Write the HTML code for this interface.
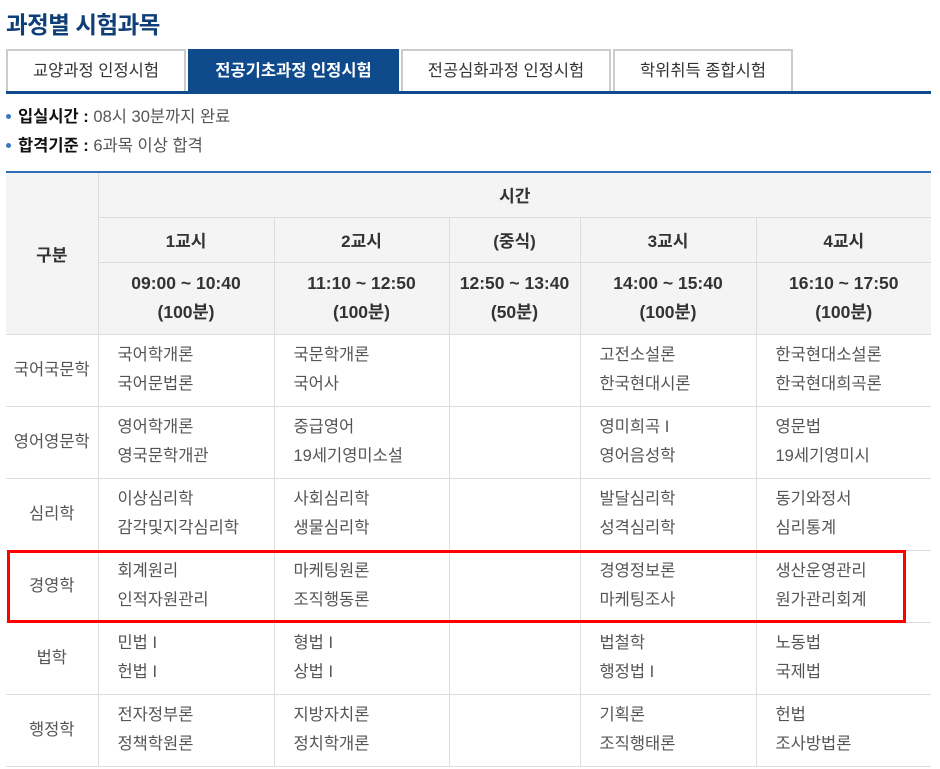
<!DOCTYPE html>
<html><head><meta charset="utf-8"><style>
*{margin:0;padding:0;box-sizing:border-box}
body{width:940px;height:769px;background:#fff;font-family:"Liberation Sans","Noto Sans CJK KR",sans-serif;position:relative;overflow:hidden;color:#444}
h1{position:absolute;left:6px;top:6px;font-size:23.5px;font-weight:bold;color:#0f3f78;letter-spacing:-0.5px}
.tab{position:absolute;top:49px;height:43px;border:2px solid #ccc;border-bottom:none;text-align:center;line-height:41px;font-size:16.5px;color:#333}
.tab.on{background:#0e4a8c;border-color:#0e4a8c;color:#fff;font-weight:bold}
.tabline{position:absolute;left:6px;top:91px;width:925px;height:3px;background:#0e4a8c}
.b{position:absolute;left:6px;font-size:16.5px;color:#555}
.b i{display:inline-block;width:5px;height:5px;border-radius:3px;background:#3a78c0;vertical-align:middle;margin-right:7px;margin-top:-3px}
.b strong{color:#111}
table{position:absolute;left:6px;top:171px;border-collapse:collapse;border-top:2px solid #2f6db5;table-layout:fixed;width:925px}
td,th{border:1px solid #ddd;font-size:16.5px}
table tr>*:first-child{border-left:none}
table tr>*:last-child{border-right:none}
th{background:#f4f4f4;color:#333;font-weight:bold;text-align:center;font-size:17px}
th.t{font-size:17.5px;line-height:29px}
td{height:72px;vertical-align:middle;padding-left:19px;line-height:29px;color:#555}
td.g{text-align:center;padding:0}
.red{position:absolute;left:7px;top:550px;width:899px;height:73px;border:3px solid #f00}
</style></head><body>
<h1>과정별 시험과목</h1>
<div class="tab" style="left:6px;width:180px">교양과정 인정시험</div>
<div class="tab on" style="left:188px;width:211px">전공기초과정 인정시험</div>
<div class="tab" style="left:401px;width:210px">전공심화과정 인정시험</div>
<div class="tab" style="left:613px;width:180px">학위취득 종합시험</div>
<div class="tabline"></div>
<div class="b" style="top:103px"><i></i><strong>입실시간 :</strong> 08시 30분까지 완료</div>
<div class="b" style="top:132px"><i></i><strong>합격기준 :</strong> 6과목 이상 합격</div>
<table>
<colgroup><col style="width:92px"><col style="width:176px"><col style="width:175px"><col style="width:131px"><col style="width:176px"><col style="width:175px"></colgroup>
<tr style="height:45px"><th rowspan="3">구분</th><th colspan="5">시간</th></tr>
<tr style="height:45px"><th>1교시</th><th>2교시</th><th>(중식)</th><th>3교시</th><th>4교시</th></tr>
<tr style="height:72px"><th class="t">09:00 ~ 10:40<br>(100분)</th><th class="t">11:10 ~ 12:50<br>(100분)</th><th class="t">12:50 ~ 13:40<br>(50분)</th><th class="t">14:00 ~ 15:40<br>(100분)</th><th class="t">16:10 ~ 17:50<br>(100분)</th></tr>
<tr><td class="g">국어국문학</td><td>국어학개론<br>국어문법론</td><td>국문학개론<br>국어사</td><td></td><td>고전소설론<br>한국현대시론</td><td>한국현대소설론<br>한국현대희곡론</td></tr>
<tr><td class="g">영어영문학</td><td>영어학개론<br>영국문학개관</td><td>중급영어<br>19세기영미소설</td><td></td><td>영미희곡 I<br>영어음성학</td><td>영문법<br>19세기영미시</td></tr>
<tr><td class="g">심리학</td><td>이상심리학<br>감각및지각심리학</td><td>사회심리학<br>생물심리학</td><td></td><td>발달심리학<br>성격심리학</td><td>동기와정서<br>심리통계</td></tr>
<tr><td class="g">경영학</td><td>회계원리<br>인적자원관리</td><td>마케팅원론<br>조직행동론</td><td></td><td>경영정보론<br>마케팅조사</td><td>생산운영관리<br>원가관리회계</td></tr>
<tr><td class="g">법학</td><td>민법 I<br>헌법 I</td><td>형법 I<br>상법 I</td><td></td><td>법철학<br>행정법 I</td><td>노동법<br>국제법</td></tr>
<tr><td class="g">행정학</td><td>전자정부론<br>정책학원론</td><td>지방자치론<br>정치학개론</td><td></td><td>기획론<br>조직행태론</td><td>헌법<br>조사방법론</td></tr>
</table>
<div class="red"></div>
</body></html>
